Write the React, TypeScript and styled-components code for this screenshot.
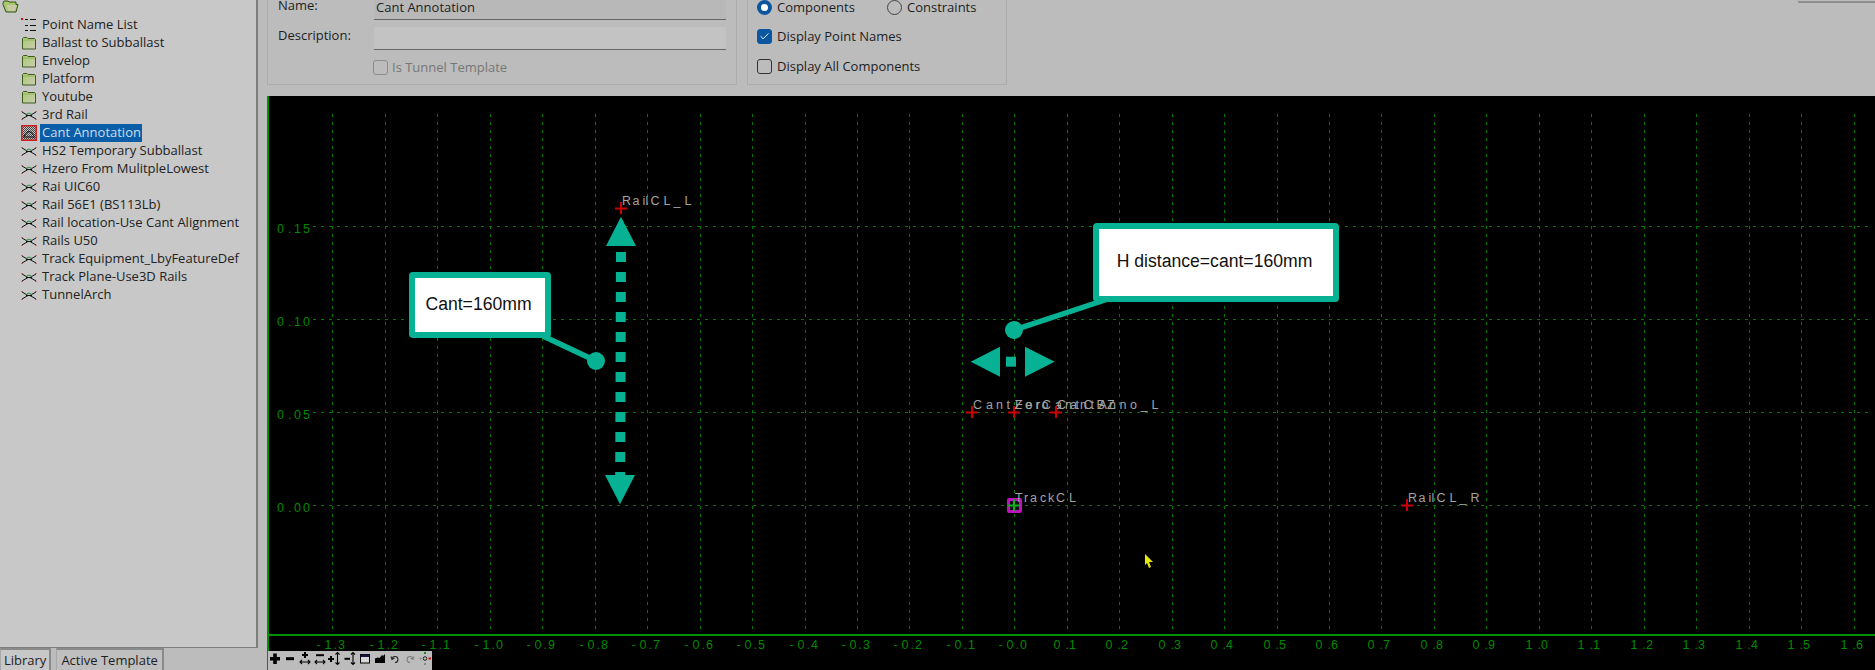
import React from "react";
import styled, { createGlobalStyle } from "styled-components";
import { Check } from "lucide-react";

const TEAL = "#07b193";
const folders = ["Ballast to Subballast", "Envelop", "Platform", "Youtube"];
const templates = [
	"3rd Rail",
	"Cant Annotation",
	"HS2 Temporary Subballast",
	"Hzero From MulitpleLowest",
	"Rai UIC60",
	"Rail 56E1 (BS113Lb)",
	"Rail location-Use Cant Alignment",
	"Rails U50",
	"Track Equipment_LbyFeatureDef",
	"Track Plane-Use3D Rails",
	"TunnelArch",
];

const GRID_X0 = 1014.3;
const GRID_DX = 52.45;
const xTicks = Array.from({ length: 30 }, (_, i) => i - 13);
const yTicks = [
	{ label: "0.15", y: 226.5 },
	{ label: "0.10", y: 319.5 },
	{ label: "0.05", y: 412.5 },
	{ label: "0.00", y: 505.5 },
];

const gridX = (n: number) => Math.round(GRID_X0 + n * GRID_DX) + 0.5;

// the app spreads each glyph of a canvas label apart, narrow ones less
const labelAdvance: Record<string, number> = { i: 3, l: 5, r: 6, a: 10, c: 8, k: 8, C: 13, L: 10, _: 11, t: 8, T: 9 };
const spreadX = (text: string, x: number) => {
	let cur = x;
	return text
		.split("")
		.map((ch) => {
			const at = cur;
			cur += labelAdvance[ch] ?? 10.5;
			return at.toFixed(1);
		})
		.join(" ");
};

const xTickLabel = (n: number) => {
	const v = Math.abs(n) / 10;
	return (n <= 0 ? "-" : "") + v.toFixed(1);
};
const xTickPositions = (n: number) => {
	const g = gridX(n);
	const offs = n <= 0 ? [-16, -8, 1, 5.5] : [-14, -2, 1.5];
	return offs.map((o) => (g + o).toFixed(1)).join(" ");
};

const points = [
	{ name: "RailCL_L", x: 621, y: 208 },
	{ name: "CantZero", x: 972, y: 412 },
	{ name: "ForCantCBZ", x: 1014, y: 412 },
	{ name: "CantAnno_L", x: 1056, y: 412 },
	{ name: "TrackCL", x: 1014, y: 505 },
	{ name: "RailCL_R", x: 1407, y: 505 },
];

const FolderIcon = () => (
	<svg width="16" height="14" viewBox="0 0 16 14">
		<defs>
			<linearGradient id="folderFill" x1="0" y1="0" x2="1" y2="1">
				<stop offset="0" stopColor="#a8cc70" />
				<stop offset="1" stopColor="#cbcbb0" />
			</linearGradient>
		</defs>
		<path d="M1.5 13V2.5L2.5 1.5H6L7 2.5H13.5L14.5 3.5V13Z" fill="url(#folderFill)" stroke="#3f5a20" />
		<path d="M2 4H14" stroke="#95b458" />
	</svg>
);

const OpenFolderIcon = () => (
	<svg width="17" height="13" viewBox="0 0 17 13">
		<path d="M1 3L2 1H6L7 2H14V4.5H16L14 12H4L1 4.5Z" fill="#a8c96a" stroke="#35501a" />
		<path d="M4.5 5H14.5L13 11H6Z" fill="#c8c9a8" />
	</svg>
);

const TemplateShape = () => (
	<>
		<path d="M1 3L7 6.5L1 10" fill="none" stroke="#111" />
		<path d="M15 3L9 6.5L15 10" fill="none" stroke="#111" />
		<path d="M5 6.5H11" stroke="#111" />
		<path d="M5 5.5Q8 2.5 11 5.5" fill="none" stroke="#2c8a3c" />
		<path d="M0.5 2.5h1M0.5 10.5h1M14.5 2.5h1M14.5 10.5h1" stroke="#d01818" />
	</>
);

const TemplateIcon = () => (
	<svg width="16" height="13" viewBox="0 0 16 13">
		<TemplateShape />
	</svg>
);

const SelectedTemplateIcon = () => (
	<svg width="16" height="16" viewBox="0 0 16 16">
		<defs>
			<pattern id="dither" width="2" height="2" patternUnits="userSpaceOnUse">
				<rect width="2" height="2" fill="#c6c6c6" />
				<rect width="1" height="1" fill="#444" />
				<rect x="1" y="1" width="1" height="1" fill="#444" />
			</pattern>
		</defs>
		<rect x=".75" y=".75" width="14.5" height="14.5" fill="url(#dither)" stroke="#cf1f1f" strokeWidth="1.5" />
		<path d="M3 11Q8 2 13 11" fill="none" stroke="#111" />
		<path d="M2 12H14" stroke="#111" />
	</svg>
);

const ListIcon = () => (
	<svg width="16" height="15" viewBox="0 0 16 15">
		<rect x="0" y="0" width="2" height="2" fill="#d01010" />
		<path d="M4 1.5H7M9 1.5H15M4 7.5H7M9 7.5H15M4 12.5H7M9 12.5H15" stroke="#111" />
	</svg>
);

const ToolIcon = ({ children }: { children: React.ReactNode }) => (
	<svg width="14" height="16" viewBox="0 0 14 16">
		{children}
	</svg>
);

const arrowsH = "M2 11H12M4 9L2 11L4 13M10 9L12 11L10 13";
const arrowsV = (x: number) => `M${x} 1.5V13.5M${x - 2} 3.5L${x} 1.5L${x + 2} 3.5M${x - 2} 11.5L${x} 13.5L${x + 2} 11.5`;

const toolIcons = [
	<path key="a" d="M5.2 2.5H8.8V6H12V9.5H8.8V13H5.2V9.5H2V6H5.2Z" fill="#000" />,
	<path key="b" d="M3 6.2H11V9.2H3Z" fill="#000" />,
	<g key="c">
		<path d="M6 1H8V3H10V5H8V7H6V5H4V3H6Z" fill="#000" />
		<path d={arrowsH} fill="none" stroke="#000" strokeWidth="1.1" />
	</g>,
	<g key="d">
		<path d="M3 3.2H11V5.2H3Z" fill="#000" />
		<path d={arrowsH} fill="none" stroke="#000" strokeWidth="1.1" />
	</g>,
	<g key="e">
		<path d="M2 5H4V7H6V9H4V11H2V9H0V7H2Z" fill="#000" />
		<path d={arrowsV(9.5)} fill="none" stroke="#000" strokeWidth="1.1" />
	</g>,
	<g key="f">
		<path d="M1.5 6.8H7V8.8H1.5Z" fill="#000" />
		<path d={arrowsV(10)} fill="none" stroke="#000" strokeWidth="1.1" />
	</g>,
	<g key="g">
		<rect x="2.5" y="3.5" width="9" height="8.5" fill="#d8d8d8" stroke="#000" />
		<rect x="2.5" y="3.5" width="9" height="2.5" fill="#14143c" />
	</g>,
	<path key="h" d="M2 12V7.5L4.5 6.5L6.5 7L9 4L10 5L12 3V12Z" fill="#000" />,
	<path key="i" d="M4 8A3 3 0 1 1 7 11.5M3 5.5L4 8.5L6.5 7" fill="none" stroke="#2a2a2a" strokeWidth="1.1" />,
	<path key="j" d="M10 8A3 3 0 1 0 7 11.5M11 5.5L10 8.5L7.5 7" fill="none" stroke="#808080" strokeWidth="1.1" />,
	<g key="k">
		<circle cx="7" cy="7.5" r="1.8" fill="none" stroke="#222" />
		<rect x="6" y="1" width="2" height="2" fill="#118a22" />
		<rect x="6" y="12" width="2" height="2" fill="#888" />
		<rect x="1.5" y="6.5" width="2" height="2" fill="#888" />
		<rect x="10.5" y="6.5" width="2.5" height="2" fill="#d01010" />
	</g>,
];

export default function App() {
	return (
		<Page>
			<GlobalStyle />
			<Side>
				<TreePanel>
					<RootRow>
						<OpenFolderIcon />
					</RootRow>
					<TreeRow>
						<IconSlot>
							<ListIcon />
						</IconSlot>
						<TreeText>Point Name List</TreeText>
					</TreeRow>
					{folders.map((f) => (
						<TreeRow key={f}>
							<IconSlot>
								<FolderIcon />
							</IconSlot>
							<TreeText>{f}</TreeText>
						</TreeRow>
					))}
					{templates.map((t) => {
						const selected = t === "Cant Annotation";
						return (
							<TreeRow key={t}>
								<IconSlot>{selected ? <SelectedTemplateIcon /> : <TemplateIcon />}</IconSlot>
								<TreeText $selected={selected}>{t}</TreeText>
							</TreeRow>
						);
					})}
				</TreePanel>
				<TabRow>
					<Tab $active>Library</Tab>
					<Tab>Active Template</Tab>
				</TabRow>
			</Side>
			<Main>
				<Header>
					<FormGroup>
						<FieldLabel>Name:</FieldLabel>
						<NameInput>Cant Annotation</NameInput>
						<DescLabel>Description:</DescLabel>
						<DescInput />
						<TunnelRow>
							<CheckBox $disabled />
							<DisabledText>Is Tunnel Template</DisabledText>
						</TunnelRow>
					</FormGroup>
					<DisplayGroup>
						<RadioRow>
							<Option>
								<Radio $on />
								Components
							</Option>
							<Option>
								<Radio />
								Constraints
							</Option>
						</RadioRow>
						<Option>
							<CheckBox $on>
								<Check size={11} strokeWidth={2} color="#fff" />
							</CheckBox>
							Display Point Names
						</Option>
						<Option>
							<CheckBox />
							Display All Components
						</Option>
					</DisplayGroup>
					<CornerButton />
				</Header>
				<Canvas>
					<CanvasSvg viewBox="267 96 1608 574">
						{xTicks.map((n) => (
							<GridLine key={n} x1={gridX(n)} x2={gridX(n)} y1={114} y2={629} />
						))}
						{yTicks.map((t) => (
							<GridLine key={t.label} x1={313} x2={1869} y1={t.y} y2={t.y} />
						))}
						<AxisLine x1={268} x2={268} y1={96} y2={670} />
						<AxisLine x1={267} x2={1875} y1={634.5} y2={634.5} />
						{xTicks.map((n) => (
							<TickText key={n} x={xTickPositions(n)} y={649}>
								{xTickLabel(n)}
							</TickText>
						))}
						{yTicks.map((t) => (
							<TickText key={t.label} x="277 288 294 303" y={t.y + 6}>
								{t.label}
							</TickText>
						))}
						{points.map((p) => (
							<g key={p.name}>
								{p.name === "TrackCL" && <rect x={p.x - 7} y={p.y - 7} width={15} height={15} rx={2} fill="#c010c0" />}
								{p.name === "TrackCL" && <rect x={p.x - 4} y={p.y - 4} width={9} height={9} fill="#111" />}
								<path
									d={`M${p.x - 6} ${p.y + 0.5}H${p.x + 6}M${p.x} ${p.y - 6}V${p.y + 6}`}
									stroke={p.name === "TrackCL" ? "#10b020" : "#cc0000"}
									strokeWidth={2}
								/>
								<PointText x={spreadX(p.name, p.x + 1)} y={p.y - 3}>
									{p.name}
								</PointText>
							</g>
						))}
						<Dotted x1={621} x2={620.2} y1={252} y2={475} />
						<Mark points="621,216.7 606,246 636,246" />
						<Mark points="620,504.3 605,475 635,475" />
						<Connector x1={543} y1={336} x2={596} y2={361} />
						<Dot cx={596} cy={361} r={9} />
						<Connector x1={1108} y1={299} x2={1014} y2={330} />
						<Dot cx={1014} cy={330} r={9} />
						<Mark points="970.7,361.7 1000,346.7 1000,376.7" />
						<Mark points="1054.7,361.7 1025,346.7 1025,376.7" />
						<rect x={1006} y={356.7} width={10} height={10} fill={TEAL} />
					</CanvasSvg>
					<Callout $left={142} $top={176} $w={142} $h={66}>
						Cant=160mm
					</Callout>
					<Callout $left={826} $top={127} $w={246} $h={79}>
						H distance=cant=160mm
					</Callout>
					<Cursor viewBox="0 0 10 14" width="10" height="14">
						<path d="M1 0L9 8H5L7 13L5 14L3 9L1 11Z" fill="#e8e800" />
					</Cursor>
					<Toolbar>
						{toolIcons.map((icon, i) => (
							<ToolIcon key={i}>{icon}</ToolIcon>
						))}
					</Toolbar>
				</Canvas>
			</Main>
		</Page>
	);
}

const GlobalStyle = createGlobalStyle`
	html, body {
		margin: 0;
		padding: 0;
		background: #bcbcbc;
		overflow: hidden;
	}
`;
const Page = styled.div`
	display: flex;
	width: 1875px;
	height: 670px;
	background: #bcbcbc;
	font-family: "Open Sans", "Liberation Sans", sans-serif;
	font-size: 13px;
	color: #1e1e1e;
`;
const Side = styled.aside`
	display: flex;
	flex-direction: column;
	width: 267px;
	flex: none;
`;
const TreePanel = styled.div`
	width: 258px;
	height: 648px;
	box-sizing: border-box;
	background: #c8c8c8;
	border-right: 2px solid #7d7d7d;
	border-bottom: 1px solid #7d7d7d;
`;
const RootRow = styled.div`
	display: flex;
	align-items: flex-start;
	height: 16px;
	padding-left: 2px;
`;
const TreeRow = styled.div`
	display: flex;
	align-items: center;
	height: 18px;
	padding-left: 21px;
`;
const IconSlot = styled.span`
	display: flex;
	align-items: center;
	justify-content: center;
	width: 16px;
	height: 18px;
	margin-right: 3px;
`;
const TreeText = styled.span<{ $selected?: boolean }>`
	padding: 0 1px 2px 2px;
	line-height: 16px;
	white-space: nowrap;
	color: ${(p) => (p.$selected ? "#cfdcec" : "#222")};
	background: ${(p) => (p.$selected ? "#0a5ea8" : "transparent")};
`;
const TabRow = styled.div`
	display: flex;
	gap: 5px;
	height: 22px;
`;
const Tab = styled.div<{ $active?: boolean }>`
	box-sizing: border-box;
	padding: 0 ${(p) => (p.$active ? 3 : 4)}px;
	line-height: 20px;
	background: ${(p) => (p.$active ? "#c8c8c8" : "#bfbfbf")};
	border-top: 2px solid #8a8a8a;
	border-right: 2px solid #8a8a8a;
	border-left: 1px solid #a8a8a8;
`;
const Main = styled.main`
	display: flex;
	flex-direction: column;
	flex: 1;
	min-width: 0;
`;
const Header = styled.header`
	display: flex;
	align-items: flex-start;
	gap: 10px;
	height: 96px;
`;
const FormGroup = styled.section`
	box-sizing: border-box;
	display: grid;
	grid-template-columns: 96px 352px;
	grid-template-rows: 20px 23px 1fr;
	row-gap: 7px;
	width: 470px;
	height: 85px;
	padding: 0 0 0 10px;
	border: 1px solid #acacac;
	border-top: none;
`;
const DisplayGroup = styled.section`
	box-sizing: border-box;
	display: flex;
	flex-direction: column;
	gap: 14px;
	width: 260px;
	height: 85px;
	padding: 0 0 0 9px;
	border: 1px solid #acacac;
	border-top: none;
`;
const CornerButton = styled.div`
	margin-left: auto;
	width: 77px;
	height: 3px;
	box-sizing: border-box;
	border-bottom: 2px solid #8e8e8e;
	border-left: 1px solid #a8a8a8;
`;
const FieldLabel = styled.label`
	line-height: 11px;
`;
const DescLabel = styled.label`
	line-height: 16px;
`;
const NameInput = styled.div`
	box-sizing: border-box;
	padding-left: 2px;
	line-height: 15px;
	background: #b8b8b8;
	border-bottom: 1px solid #666;
`;
const DescInput = styled.div`
	background: #c3c3c3;
	border-bottom: 1px solid #666;
`;
const TunnelRow = styled.div`
	grid-column: 2;
	display: flex;
	align-items: center;
	gap: 4px;
	height: 16px;
	margin-top: 2px;
	margin-left: -1px;
`;
const DisabledText = styled.span`
	color: #777;
`;
const RadioRow = styled.div`
	display: grid;
	grid-template-columns: 130px auto;
	height: 15px;
	margin-top: -1px;
`;
const Option = styled.label`
	display: flex;
	align-items: center;
	gap: 5px;
	height: 16px;
	white-space: nowrap;
`;
const Radio = styled.span<{ $on?: boolean }>`
	box-sizing: border-box;
	width: 15px;
	height: 15px;
	flex: none;
	border-radius: 50%;
	background: ${(p) => (p.$on ? "#fff" : "transparent")};
	border: ${(p) => (p.$on ? "4px solid #0a56a0" : "1px solid #444")};
`;
const CheckBox = styled.span<{ $on?: boolean; $disabled?: boolean }>`
	box-sizing: border-box;
	display: flex;
	align-items: center;
	justify-content: center;
	width: 15px;
	height: 15px;
	flex: none;
	border-radius: 3px;
	background: ${(p) => (p.$on ? "#0a56a0" : "transparent")};
	border: 1px solid ${(p) => (p.$on ? "#0a56a0" : p.$disabled ? "#8c8c8c" : "#333")};
`;
const Canvas = styled.div`
	position: relative;
	flex: 1;
	background: #000;
	overflow: hidden;
`;
const CanvasSvg = styled.svg`
	display: block;
	width: 100%;
	height: 100%;
`;
const GridLine = styled.line`
	stroke: #007a00;
	stroke-width: 1;
	stroke-dasharray: 3 5;
	shape-rendering: crispEdges;
`;
const AxisLine = styled.line`
	stroke: #009000;
	stroke-width: 2;
	shape-rendering: crispEdges;
`;
const TickText = styled.text`
	font-family: "Liberation Sans", sans-serif;
	font-size: 12.5px;
	fill: #008a00;
`;
const PointText = styled.text`
	font-family: "Liberation Sans", sans-serif;
	font-size: 12.5px;
	fill: #a4a4a4;
`;
const Dotted = styled.line`
	stroke: ${TEAL};
	stroke-width: 10;
	stroke-dasharray: 10 10;
`;
const Mark = styled.polygon`
	fill: ${TEAL};
`;
const Connector = styled.line`
	stroke: ${TEAL};
	stroke-width: 5.5;
`;
const Dot = styled.circle`
	fill: ${TEAL};
`;
const Callout = styled.div<{ $left: number; $top: number; $w: number; $h: number }>`
	position: absolute;
	left: ${(p) => p.$left}px;
	top: ${(p) => p.$top}px;
	width: ${(p) => p.$w}px;
	height: ${(p) => p.$h}px;
	box-sizing: border-box;
	display: flex;
	align-items: center;
	justify-content: center;
	padding: 0 3px 2px 0;
	background: #fff;
	border: 6px solid ${TEAL};
	border-radius: 4px;
	font-family: "Liberation Sans", sans-serif;
	font-size: 17.6px;
	color: #111;
	white-space: nowrap;
`;
const Cursor = styled.svg`
	position: absolute;
	left: 877px;
	top: 458px;
`;
const Toolbar = styled.div`
	position: absolute;
	left: 1px;
	bottom: 0;
	display: flex;
	align-items: flex-start;
	gap: 1px;
	width: 164px;
	height: 19px;
	background: #bcbcbc;
`;
